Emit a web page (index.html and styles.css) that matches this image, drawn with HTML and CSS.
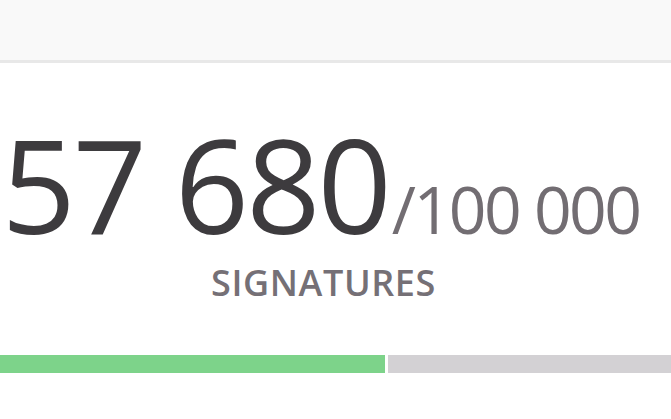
FILE: index.html
```html
<!DOCTYPE html>
<html lang="en">
<head>
<meta charset="utf-8">
<title>Petition progress</title>
<link rel="stylesheet" href="styles.css">
</head>
<body>
  <header class="topbar"></header>
  <main class="counter">
    <div class="count-line">
      <span class="count">57 680</span><span class="goal">/100 000</span>
    </div>
    <div class="label">SIGNATURES</div>
  </main>
  <div class="progress">
    <div class="progress-fill" style="width: 385px"></div>
    <div class="progress-rest"></div>
  </div>
</body>
</html>
```

FILE: styles.css
```css
html, body {
  margin: 0;
  padding: 0;
  background: #ffffff;
  font-family: "Open Sans", "Noto Sans", sans-serif;
}

.topbar {
  height: 60px;
  background: #f9f9f9;
  border-bottom: 3px solid #e8e8e8;
}

.counter {
  display: flex;
  flex-direction: column;
  align-items: center;
  padding-right: 30px;
}

.count-line {
  display: flex;
  align-items: baseline;
  white-space: nowrap;
  margin-top: 56px;
  line-height: 1;
  height: 146px;
}

.count {
  font-size: 130px;
  letter-spacing: -3px;
  color: #3d3b3e;
}

.goal {
  font-size: 66px;
  letter-spacing: -2.5px;
  color: #726d72;
  margin-left: 3px;
}

.label {
  font-size: 36px;
  font-weight: 600;
  letter-spacing: 0.6px;
  color: #757076;
  line-height: 1;
  margin-left: 6px;
}

.progress {
  display: flex;
  gap: 3px;
  height: 18px;
  margin-top: 54px;
}

.progress-fill {
  background: #7dd38a;
}

.progress-rest {
  flex: 1;
  background: #d3d1d4;
}
```
